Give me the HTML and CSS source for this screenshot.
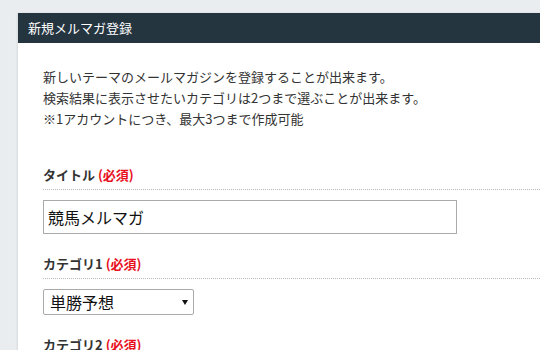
FILE: index.html
```html
<!DOCTYPE html>
<html lang="ja">
<head>
<meta charset="utf-8">
<link rel="stylesheet" href="styles.css">
</head>
<body>
<div class="card">
  <div class="card-header">新規メルマガ登録</div>
  <div class="card-body">
    <p class="intro">新しいテーマのメールマガジンを登録することが出来ます。<br>検索結果に表示させたいカテゴリは2つまで選ぶことが出来ます。<br>※1アカウントにつき、最大3つまで作成可能</p>
    <div class="field">
      <div class="label">タイトル <span class="req">(必須)</span></div>
      <input class="text-input" type="text" value="競馬メルマガ">
    </div>
    <div class="field">
      <div class="label">カテゴリ1 <span class="req">(必須)</span></div>
      <div class="select-wrap">
        <select class="select"><option>単勝予想</option></select>
      </div>
    </div>
    <div class="field">
      <div class="label">カテゴリ2 <span class="req">(必須)</span></div>
    </div>
  </div>
</div>
</body>
</html>
```
FILE: styles.css
```css
html, body {
  margin: 0;
  padding: 0;
}
body {
  background: #e9edf0;
  font-family: "Noto Sans CJK JP", "Noto Sans", sans-serif;
  color: #333;
  overflow: hidden;
  width: 540px;
  height: 350px;
}
.card {
  margin: 13px 0 0 18px;
  width: 560px;
  background: #fff;
  box-shadow: -1px 0 2px rgba(0,0,0,0.08);
}
.card-header {
  height: 30px;
  line-height: 30px;
  background: #253540;
  color: #fff;
  font-size: 13px;
  padding-left: 10px;
}
.card-body {
  padding: 23px 0 40px 25px;
}
.intro {
  margin: 0 0 35px;
  font-size: 13px;
  line-height: 21px;
  color: #333;
}
.field {
  margin-bottom: 19px;
}
.label {
  font-size: 13px;
  line-height: 21px;
  font-weight: bold;
  color: #333;
  padding-bottom: 4px;
  border-bottom: 1px dotted #bbb;
  margin-bottom: 10px;
}
.req {
  color: #e8101e;
}
.text-input {
  display: block;
  box-sizing: border-box;
  width: 414px;
  height: 34px;
  margin: 0;
  border: 1px solid #aaa;
  padding: 0 4px;
  font-family: "Noto Sans CJK JP", sans-serif;
  font-size: 16px;
  color: #111;
  background: #fff;
  outline: none;
}
.select-wrap {
  position: relative;
  width: 151px;
}
.select {
  display: block;
  box-sizing: border-box;
  width: 151px;
  height: 26px;
  margin: 0;
  border: 1px solid #aaa;
  border-radius: 2px;
  padding: 0 6px;
  font-family: "Noto Sans CJK JP", sans-serif;
  font-size: 16px;
  color: #111;
  background: #fff;
  -webkit-appearance: none;
  appearance: none;
}
.select-wrap::after {
  content: "";
  position: absolute;
  right: 6px;
  top: 11px;
  border-left: 3px solid transparent;
  border-right: 3px solid transparent;
  border-top: 5px solid #111;
}
```
